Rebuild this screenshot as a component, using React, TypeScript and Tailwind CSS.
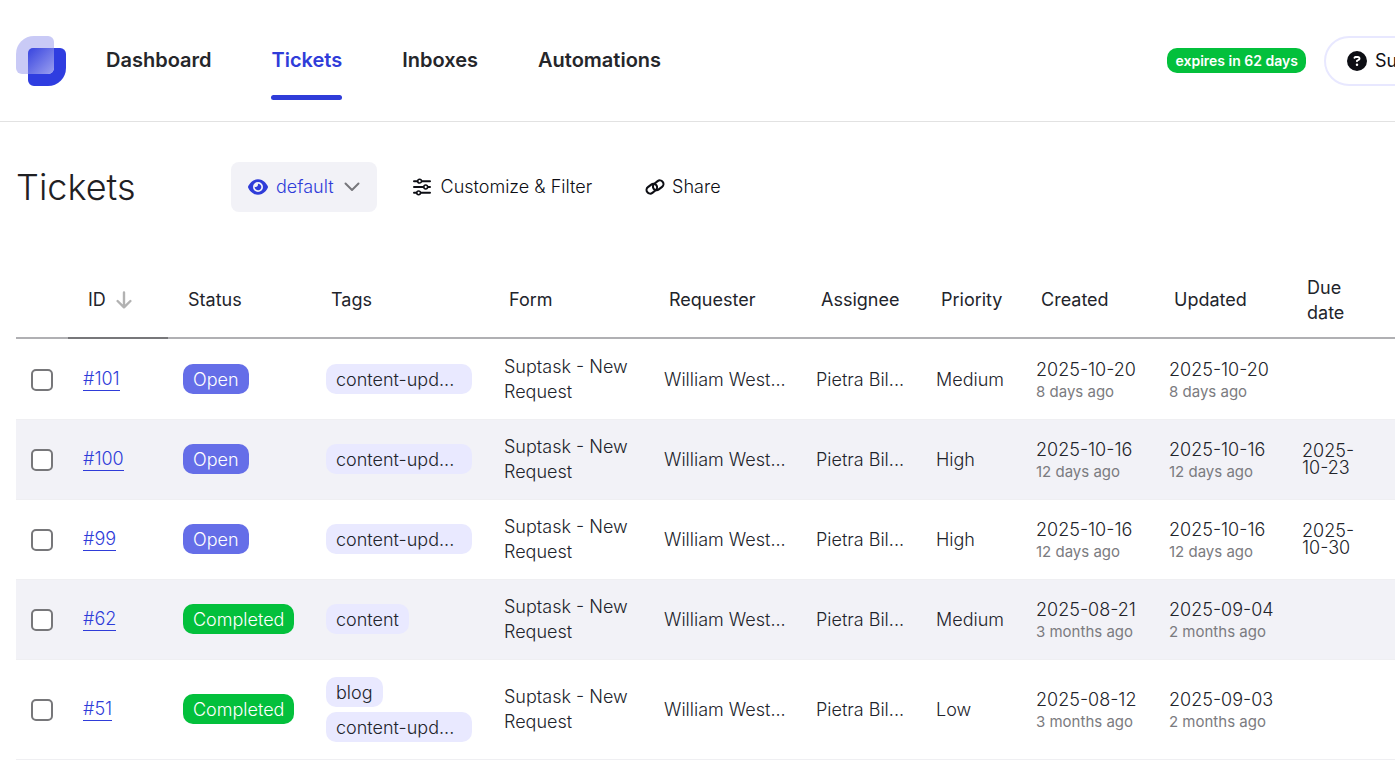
import React from 'react';
import { FaEye, FaCircleQuestion } from 'react-icons/fa6';

// ─── Types ────────────────────────────────────────────────────────────────────

type DateCell = { date: string; ago: string };
type Ticket = {
  id: number;
  status: 'Open' | 'Completed';
  tags: string[];
  form: string;
  requester: string;
  assignee: string;
  priority: string;
  created: DateCell;
  updated: DateCell;
  due?: string;
};

// ─── Data ─────────────────────────────────────────────────────────────────────

const NAV = ['Dashboard', 'Tickets', 'Inboxes', 'Automations'];

const COLUMNS = ['Status', 'Tags', 'Form', 'Requester', 'Assignee', 'Priority', 'Created', 'Updated', 'Due date'];

const people = { form: 'Suptask - New Request', requester: 'William West...', assignee: 'Pietra Bil...' };

const TICKETS: Ticket[] = [
  {
    ...people, id: 101, status: 'Open', tags: ['content-upd...'], priority: 'Medium',
    created: { date: '2025-10-20', ago: '8 days ago' },
    updated: { date: '2025-10-20', ago: '8 days ago' },
  },
  {
    ...people, id: 100, status: 'Open', tags: ['content-upd...'], priority: 'High',
    created: { date: '2025-10-16', ago: '12 days ago' },
    updated: { date: '2025-10-16', ago: '12 days ago' },
    due: '2025-10-23',
  },
  {
    ...people, id: 99, status: 'Open', tags: ['content-upd...'], priority: 'High',
    created: { date: '2025-10-16', ago: '12 days ago' },
    updated: { date: '2025-10-16', ago: '12 days ago' },
    due: '2025-10-30',
  },
  {
    ...people, id: 62, status: 'Completed', tags: ['content'], priority: 'Medium',
    created: { date: '2025-08-21', ago: '3 months ago' },
    updated: { date: '2025-09-04', ago: '2 months ago' },
  },
  {
    ...people, id: 51, status: 'Completed', tags: ['blog', 'content-upd...'], priority: 'Low',
    created: { date: '2025-08-12', ago: '3 months ago' },
    updated: { date: '2025-09-03', ago: '2 months ago' },
  },
];

// ─── Icons ────────────────────────────────────────────────────────────────────

function Logo() {
  return (
    <svg width="50" height="50" viewBox="0 0 50 50" fill="none" aria-hidden="true">
      <defs>
        <linearGradient id="logoOverlap" x1="14" y1="14" x2="36" y2="36" gradientUnits="userSpaceOnUse">
          <stop offset="0" stopColor="#3f4be0" />
          <stop offset="1" stopColor="#9499ee" />
        </linearGradient>
      </defs>
      <path d="M17 12h27a6 6 0 0 1 6 6v14a18 18 0 0 1-18 18H18a6 6 0 0 1-6-6V17a5 5 0 0 1 5-5z" fill="#2f3de0" />
      <path d="M18 0h14a6 6 0 0 1 6 6v26a6 6 0 0 1-6 6H6a6 6 0 0 1-6-6V18A18 18 0 0 1 18 0z" fill="#c9caf6" />
      <path d="M17 12h21v20a6 6 0 0 1-6 6H12V17a5 5 0 0 1 5-5z" fill="url(#logoOverlap)" />
    </svg>
  );
}

function SlidersIcon() {
  return (
    <svg width="18" height="18" viewBox="0 0 18 18" fill="none" stroke="currentColor" strokeWidth="2" strokeLinecap="round" aria-hidden="true">
      <path d="M1 3.2h3.4M9 3.2h8M1 9h9.4M15 9h2M1 14.8h2.4M8 14.8h9" />
      <g strokeWidth="1.5">
        <circle cx="6.6" cy="3.2" r="1.9" />
        <circle cx="12.7" cy="9" r="1.9" />
        <circle cx="5.6" cy="14.8" r="1.9" />
      </g>
    </svg>
  );
}

function LinkIcon() {
  return (
    <svg width="20" height="16" viewBox="0 0 20 16" fill="none" stroke="currentColor" strokeWidth="2.1" aria-hidden="true">
      <rect x="1.1" y="6.1" width="11.4" height="7.2" rx="3.6" transform="rotate(-38 6.8 9.7)" />
      <rect x="7.5" y="2.7" width="11.4" height="7.2" rx="3.6" transform="rotate(-38 13.2 6.3)" />
    </svg>
  );
}

function ChevronIcon() {
  return (
    <svg width="16" height="10" viewBox="0 0 16 10" fill="none" stroke="#77777c" strokeWidth="2" strokeLinecap="round" strokeLinejoin="round" aria-hidden="true">
      <path d="M1.5 1.5 8 8l6.5-6.5" />
    </svg>
  );
}

function SortArrow() {
  return (
    <svg width="16" height="18" viewBox="0 0 16 18" fill="none" stroke="#b2b2b2" strokeWidth="2.4" strokeLinecap="round" strokeLinejoin="round" aria-hidden="true">
      <path d="M8 1.4v14.8M1.6 10 8 16.4 14.4 10" />
    </svg>
  );
}

// ─── Sub-components ───────────────────────────────────────────────────────────

function Header() {
  return (
    <header className="flex h-[122px] items-center border-b border-[#e2e2e2] pl-4">
      <a href="#" aria-label="Home" className="mr-10 shrink-0">
        <Logo />
      </a>
      <nav className="flex h-full shrink-0 gap-[60px] text-xl font-semibold">
        {NAV.map((item) => {
          const active = item === 'Tickets';
          return (
            <a
              key={item}
              href="#"
              aria-current={active ? 'page' : undefined}
              className={`flex h-[100px] flex-col justify-end ${active ? 'text-[#2f3cd9]' : 'text-[#25262a]'}`}
            >
              {item}
              <span className={`mt-[21px] h-[5px] rounded-full ${active ? 'bg-[#2f3cd9]' : ''}`} />
            </a>
          );
        })}
      </nav>
      <div className="-mr-16 ml-auto flex shrink-0 items-center gap-[18px]">
        <span className="rounded-[10px] bg-[#03c03c] px-2 text-sm leading-[25px] font-semibold text-white">
          expires in 62 days
        </span>
        <button className="flex h-[50px] w-[135px] items-center gap-2 rounded-full border-2 border-[#e8e8ff] pl-[21px] text-lg text-[#0d0e14]">
          <FaCircleQuestion size={20} className="shrink-0" />
          Support
        </button>
      </div>
    </header>
  );
}

function Toolbar() {
  return (
    <div className="flex items-center pt-10 pl-4 text-lg font-light text-[#0d0e14]">
      <h1 className="w-[215px] text-4xl font-light text-[#1f2023]">Tickets</h1>
      <button className="flex h-[50px] items-center rounded-lg bg-[#f2f2f7] px-[17px] text-[#2f3cd9]">
        <FaEye size={20} className="mr-2" />
        default
        <span className="ml-[10px]">
          <ChevronIcon />
        </span>
      </button>
      <button className="ml-9 flex items-center gap-[10px]">
        <SlidersIcon />
        Customize &amp; Filter
      </button>
      <button className="ml-[53px] flex items-center gap-[7px]">
        <LinkIcon />
        Share
      </button>
    </div>
  );
}

function DateBlock({ date, ago }: DateCell) {
  return (
    <div className="whitespace-nowrap">
      <div className="leading-[24px]">{date}</div>
      <div className="text-[15px] leading-[20px] font-normal text-[#7b7b80]">{ago}</div>
    </div>
  );
}

function TicketRow({ ticket, first, tall }: { ticket: Ticket; first: boolean; tall: boolean }) {
  // divider is an inset shadow so every row keeps the same height
  const base = `px-[15px] ${first ? '' : 'shadow-[inset_0_1px_#efeff2]'}`;
  const cell = `${base} py-[14px]`;
  const textCell = `${base} pt-4 pb-[14px]`;
  return (
    <tr className={`even:bg-[#f2f2f7] ${tall ? 'h-[100px]' : 'h-20'}`}>
      <td className={textCell}>
        <input
          type="checkbox"
          aria-label={`Select ticket #${ticket.id}`}
          className="block size-[22px] appearance-none rounded-[5px] border-2 border-[#77777a] bg-white"
        />
      </td>
      <td className={cell}>
        <a href="#" className="block w-fit border-b border-[#2f3cd9] leading-[22px] text-[#2f3cd9]">#{ticket.id}</a>
      </td>
      <td className={cell}>
        <span
          className={`block w-fit rounded-[10px] px-[10px] pt-[2px] leading-[28px] text-white ${
            ticket.status === 'Open' ? 'bg-[#656ee8]' : 'bg-[#03c03c]'
          }`}
        >
          {ticket.status}
        </span>
      </td>
      <td className={cell}>
        <div className="flex flex-col items-start gap-[5px]">
          {ticket.tags.map((tag) => (
            <span
              key={tag}
              className={`rounded-[10px] bg-[#e9e9ff] px-[10px] pt-[2px] leading-[28px] ${tag.endsWith('...') ? 'w-[146px]' : ''}`}
            >
              {tag}
            </span>
          ))}
        </div>
      </td>
      <td className={`${cell} leading-[25px]`}>{ticket.form}</td>
      <td className={textCell}>{ticket.requester}</td>
      <td className={textCell}>{ticket.assignee}</td>
      <td className={textCell}>{ticket.priority}</td>
      <td className={textCell}><DateBlock {...ticket.created} /></td>
      <td className={textCell}><DateBlock {...ticket.updated} /></td>
      <td className={`${cell} leading-[17px]`}>{ticket.due}</td>
    </tr>
  );
}

function TicketTable() {
  const th = 'border-b-2 border-[#b0b0b3] px-5 font-normal leading-[25px]';
  return (
    <table className="mt-[50px] ml-4 w-[calc(100%-16px)] min-w-[1379px] table-fixed border-separate border-spacing-0 border-b border-[#efeff2] text-left text-lg font-light text-[#22242b]">
      <colgroup>
        <col className="w-[52px]" />
        <col className="w-[100px]" />
        <col className="w-[143px]" />
        <col className="w-[178px]" />
        <col className="w-[160px]" />
        <col className="w-[152px]" />
        <col className="w-[120px]" />
        <col className="w-[100px]" />
        <col className="w-[133px]" />
        <col className="w-[133px]" />
        <col />
      </colgroup>
      <thead>
        <tr className="h-[77px]">
          <td className="border-b-2 border-[#b0b0b3]" />
          <th aria-sort="descending" className="border-b-2 border-[#77777a] px-5 font-normal">
            <button className="flex items-center gap-[10px]">
              ID
              <SortArrow />
            </button>
          </th>
          {COLUMNS.map((c) => (
            <th key={c} className={th}>{c}</th>
          ))}
        </tr>
      </thead>
      <tbody>
        {TICKETS.map((t, i) => (
          <TicketRow key={t.id} ticket={t} first={i === 0} tall={t.tags.length > 1} />
        ))}
      </tbody>
    </table>
  );
}

// ─── Main View ────────────────────────────────────────────────────────────────

export default function App() {
  return (
    <div className="overflow-hidden bg-white font-['Inter',sans-serif]">
      <Header />
      <main>
        <Toolbar />
        <TicketTable />
      </main>
    </div>
  );
}
